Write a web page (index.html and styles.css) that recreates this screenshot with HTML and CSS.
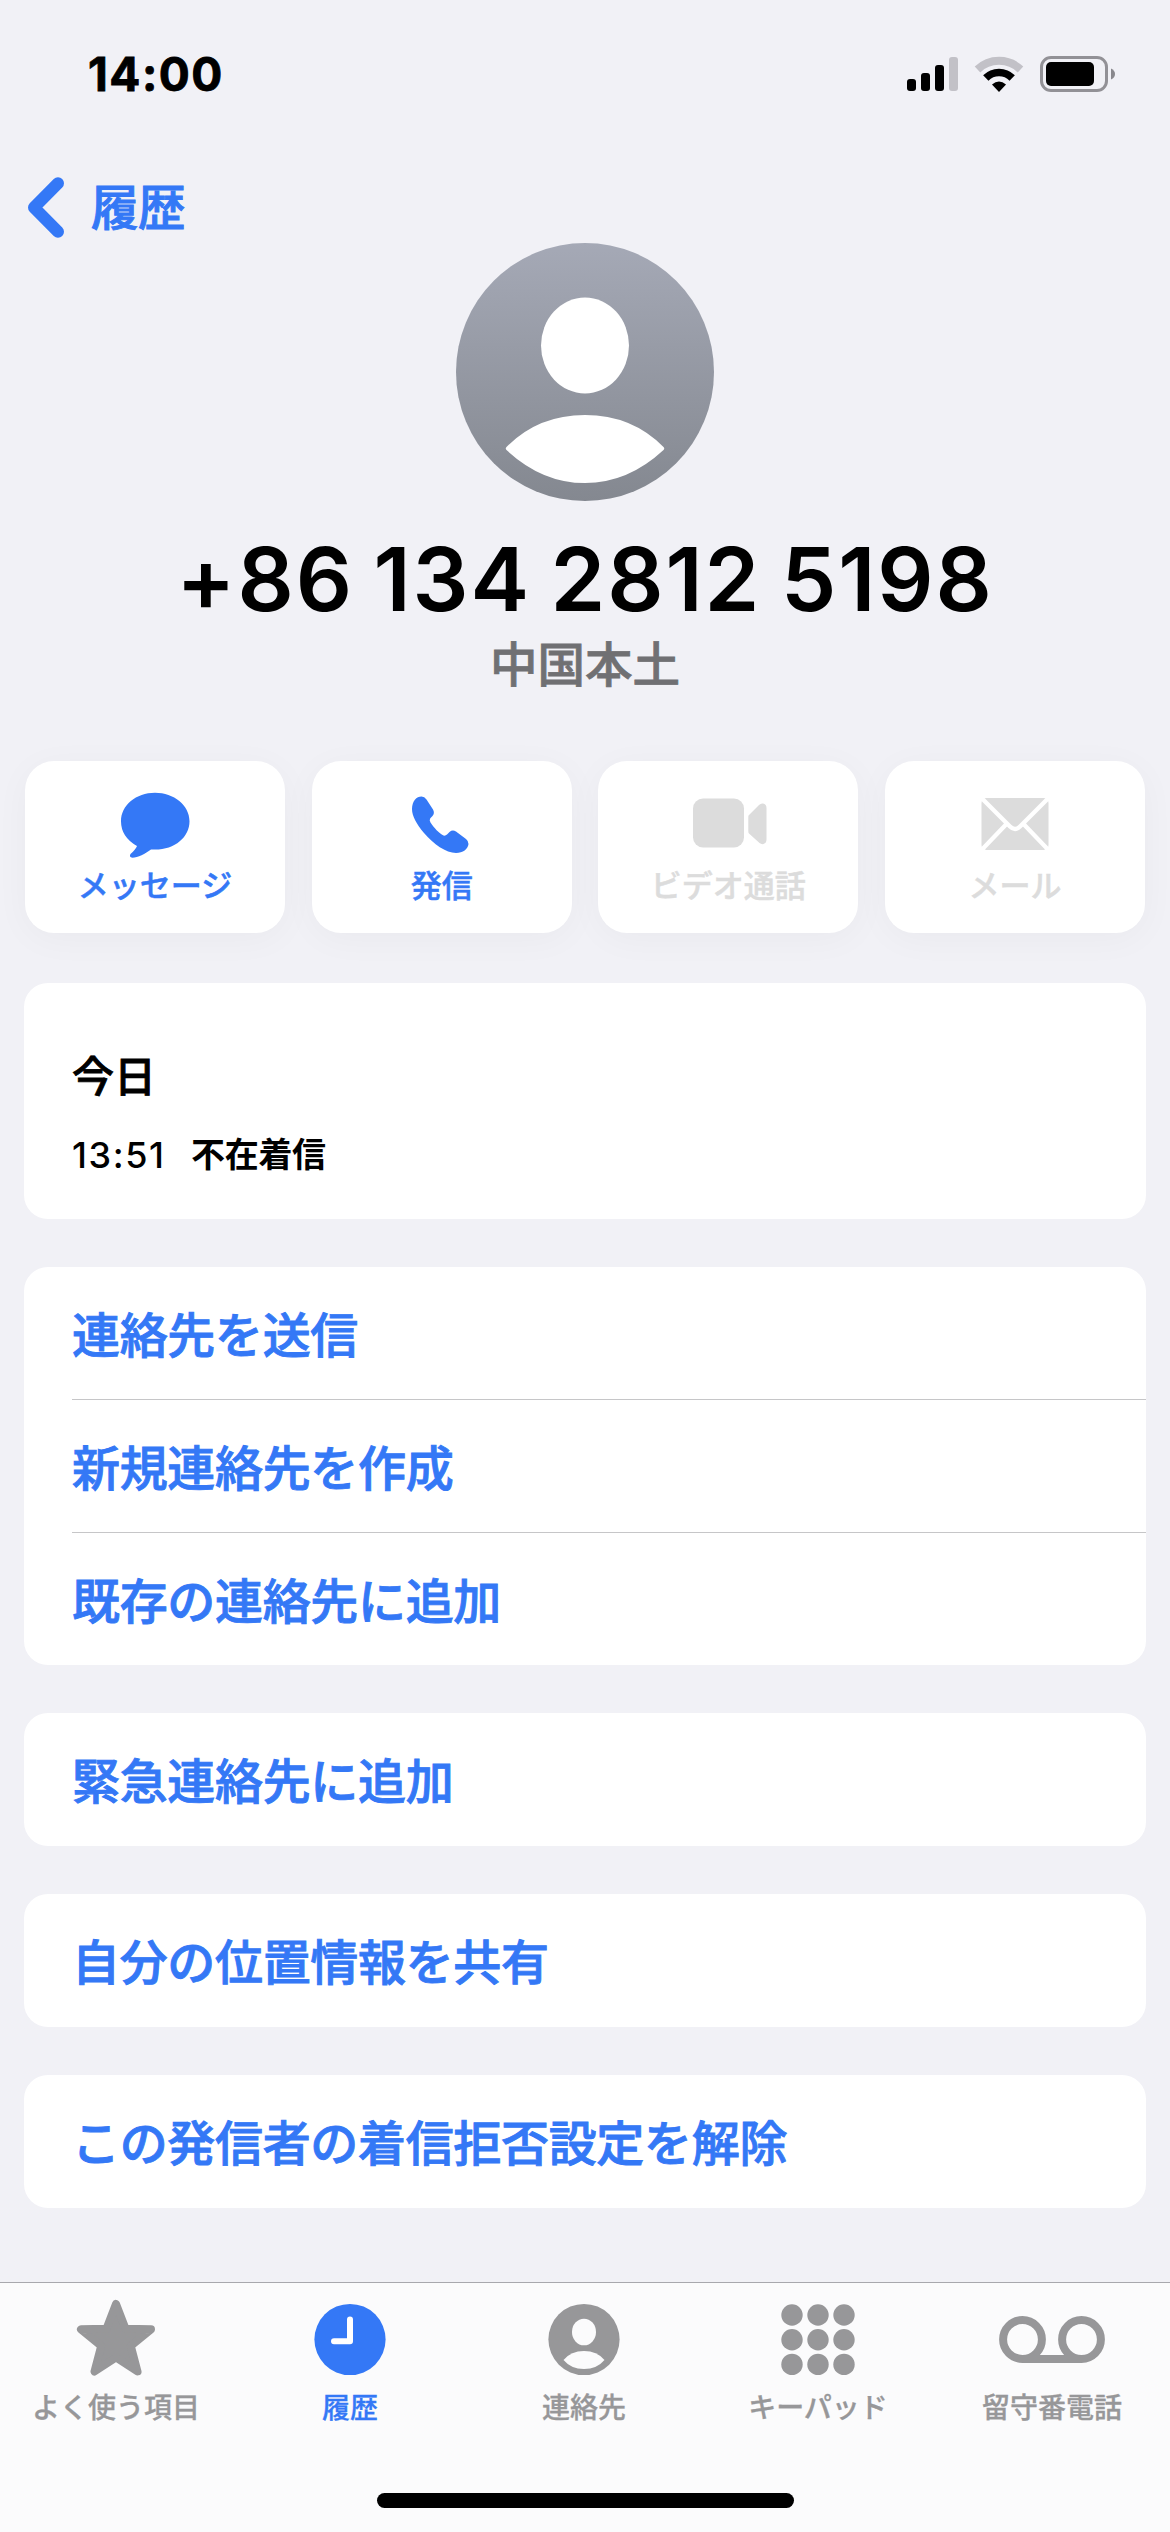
FILE: index.html
```html
<!DOCTYPE html>
<html lang="ja">
<head>
<meta charset="utf-8">
<title>履歴</title>
<link rel="stylesheet" href="styles.css">
</head>
<body>
<div class="screen">
  <header class="status">
    <span class="clock">14:00</span>
    <div class="status-icons">
      <svg width="51" height="36" viewBox="0 0 51 36"><rect x="0" y="23" width="9" height="12" rx="3"/><rect x="14" y="17" width="9" height="18" rx="3"/><rect x="28" y="9" width="9" height="26" rx="3"/><rect x="42" y="1" width="9" height="34" rx="3" fill="#c2c1c7"/></svg>
      <svg width="50" height="37" viewBox="0 0 50 37"><path d="M3.500 13.500A31 31 0 0 1 46.500 13.500" fill="none" stroke="#c2c1c7" stroke-width="8"/><path d="M11.800 22A18.500 18.500 0 0 1 38.200 22" fill="none" stroke="#000" stroke-width="7.500"/><path d="M18 28.500q7-6 14 0L25 36z"/></svg>
      <svg width="76" height="36" viewBox="0 0 76 36"><rect x="1.500" y="1.500" width="65" height="33" rx="9.500" fill="none" stroke="#929196" stroke-width="3"/><rect x="6" y="6" width="48" height="24" rx="5"/><path d="M71 12.500q4 2 4 5.500t-4 5.500z" fill="#89888d"/></svg>
    </div>
  </header>

  <nav class="nav">
    <svg width="36" height="61" viewBox="0 0 36 61"><path d="M30 6.200 6 30.500 30 54.800" fill="none" stroke="#3478f6" stroke-width="12" stroke-linecap="round" stroke-linejoin="round"/></svg>
    <span>履歴</span>
  </nav>

  <section class="profile">
    <svg class="avatar" width="258" height="258" viewBox="0 0 258 258">
      <defs><linearGradient id="av" x1="0" y1="0" x2="0" y2="1"><stop offset="0" stop-color="#a5a9b6"/><stop offset="1" stop-color="#848890"/></linearGradient></defs>
      <circle cx="129" cy="129" r="129" fill="url(#av)"/>
      <ellipse cx="129" cy="102.500" rx="44" ry="48" fill="#fff"/>
      <path d="M50.500 204Q82 172 129 172T207.500 204Q209 205.500 207.500 207Q172 240 129 240T50.500 207Q49 205.500 50.500 204z" fill="#fff"/>
    </svg>
    <h1 class="number">+86 134 2812 5198</h1>
    <p class="region">中国本土</p>
  </section>

  <section class="actions">
    <div class="action">
      <svg width="70" height="68" viewBox="0 0 70 68"><path d="M35 2C54 2 69.500 16 69.500 33.500S55 65 35 65H31C25 70 17 74.500 11.500 74Q9 73 10.500 70C14 66.500 16.500 63 17 61Q1 51 1 33.500C1 16 16 2 35 2z" transform="scale(1 .9)"/></svg>
      <span>メッセージ</span>
    </div>
    <div class="action">
      <svg class="phone" width="58" height="68" viewBox="0 0 58 68"><path d="M1 18C1 10 5.500 5.500 10.500 5.500Q13.500 5.500 15.500 8.500L22 18.500Q24 22 21.500 25L19.300 27.300Q18 29 19.500 31.500C23 37 28 42 32.500 44.500Q34.500 45 36 43.500L38.500 41Q41.500 38.500 45 40.500L55 48Q57.500 50 57.500 53C57 58 52 62 45 62C35 62 22.500 53 13 42C5.500 33 1 25 1 18z"/></svg>
      <span>発信</span>
    </div>
    <div class="action off">
      <svg class="video" width="75" height="68" viewBox="0 0 75 68"><rect x="0" y="7.500" width="51" height="49" rx="10"/><path d="M55.500 24.500 66 14Q68 12 70 12.500Q73.500 13 73.500 17V48.500Q73.500 52 70.500 53Q68.500 53.500 66.500 52L56 42.500Q55.300 42 55.300 40V27Q55.300 25.300 55.500 24.500z"/></svg>
      <span>ビデオ通話</span>
    </div>
    <div class="action off">
      <svg width="68" height="68" viewBox="0 0 68 68"><rect x=".5" y="7" width="67" height="52" rx="5"/><path d="M1 7.500 29 35.500Q34 40.500 39 35.500L67 7.500M25 33.500 1 58.500M43 33.500 67 58.500" fill="none" stroke="#fff" stroke-width="4.300"/></svg>
      <span>メール</span>
    </div>
  </section>

  <section class="card calls">
    <h2>今日</h2>
    <p><span class="time">13:51</span><b>不在着信</b></p>
  </section>

  <ul class="card list">
    <li>連絡先を送信</li>
    <li>新規連絡先を作成</li>
    <li>既存の連絡先に追加</li>
  </ul>
  <div class="card row">緊急連絡先に追加</div>
  <div class="card row">自分の位置情報を共有</div>
  <div class="card row">この発信者の着信拒否設定を解除</div>

  <footer class="tabs">
    <div class="tab">
      <svg width="80" height="80" viewBox="0 0 80 80"><path d="M40 8 49.500 32.700 75 33.300 54.800 50 61.500 75.500 40 61.500 18.500 75.500 25.200 50 5 33.300 30.500 32.700z" stroke="#979799" stroke-width="8" stroke-linejoin="round"/></svg>
      <span>よく使う項目</span>
    </div>
    <div class="tab on">
      <svg width="72" height="80" viewBox="0 0 72 80"><circle cx="36" cy="43.500" r="35.600"/><path d="M36 23.500V45.300H20" fill="none" stroke="#fff" stroke-width="6" stroke-linecap="round" stroke-linejoin="round"/></svg>
      <span>履歴</span>
    </div>
    <div class="tab">
      <svg width="72" height="80" viewBox="0 0 72 80"><circle cx="36" cy="43.500" r="35.600"/><ellipse cx="36" cy="36" rx="12" ry="13.300" fill="#fbfbfc"/><path d="M15.500 64Q23 55 36 55T56.500 64Q49 73 36 73T15.500 64z" fill="#fbfbfc"/></svg>
      <span>連絡先</span>
    </div>
    <div class="tab">
      <svg width="74" height="80" viewBox="0 0 74 80"><g><circle cx="11" cy="19" r="10.700"/><circle cx="37" cy="19" r="10.700"/><circle cx="63" cy="19" r="10.700"/><circle cx="11" cy="43.700" r="10.700"/><circle cx="37" cy="43.700" r="10.700"/><circle cx="63" cy="43.700" r="10.700"/><circle cx="11" cy="68.400" r="10.700"/><circle cx="37" cy="68.400" r="10.700"/><circle cx="63" cy="68.400" r="10.700"/></g></svg>
      <span>キーパッド</span>
    </div>
    <div class="tab">
      <svg width="106" height="80" viewBox="0 0 106 80"><g fill="none" stroke="#979799" stroke-width="8"><circle cx="23.500" cy="43.500" r="19.400"/><circle cx="82.500" cy="43.500" r="19.400"/><path d="M23.500 63H82.500"/></g></svg>
      <span>留守番電話</span>
    </div>
    <div class="home"></div>
  </footer>
</div>
</body>
</html>
```
FILE: styles.css
```css
* { box-sizing: border-box; margin: 0; padding: 0; }
body {
  width: 1170px;
  height: 2532px;
  background: #f1f1f6;
  color: #000;
  font-family: Inter, "Noto Sans CJK JP", sans-serif;
}
svg { display: block; flex: none; }
.screen { display: flex; flex-direction: column; height: 2532px; overflow: hidden; }

.status { display: flex; justify-content: space-between; height: 150px; padding: 0 54px 0 88px; }
.clock { margin-top: 44px; font-size: 46px; line-height: 60px; font-weight: 700; letter-spacing: 1.5px; -webkit-text-stroke: .8px; }
.status-icons { display: flex; gap: 16px; padding-top: 56px; }

.nav { display: flex; align-items: center; gap: 27px; height: 93px; padding: 22px 28px 0; color: #3478f6; font-size: 47.500px; font-weight: 500; letter-spacing: -0.500px; -webkit-text-stroke: 1px; }
.nav span { padding-top: 1px; line-height: 60px; }

.profile { display: flex; flex-direction: column; align-items: center; height: 518px; }
.number { margin-top: 24px; font-size: 88px; line-height: 108px; font-weight: 600; white-space: nowrap; letter-spacing: 1.9px; word-spacing: -4.500px; }
.region { margin-top: 2px; color: #707073; font-size: 47.500px; line-height: 60px; font-weight: 500; -webkit-text-stroke: .8px; }

.actions { display: grid; grid-template-columns: repeat(4, 260px); justify-content: space-between; height: 222px; padding: 0 25px; }
.action {
  display: flex; flex-direction: column; align-items: center;
  height: 172px; padding-top: 30px; border-radius: 29px;
  background: #fff; box-shadow: 0 6px 36px rgba(0, 0, 0, .035);
  color: #3478f6; fill: #3478f6; font-size: 31px; line-height: 40px; font-weight: 500;
  -webkit-text-stroke: .5px;
}
.action span { margin-top: 7px; }
.action.off { color: #dcdcdc; fill: #dcdcdc; }
.phone { margin-right: 3px; }
.video { margin-left: 5px; }

.card { flex: none; margin: 0 24px 48px; border-radius: 24px; background: #fff; }
.calls { height: 236px; padding: 67px 48px 0; }
.calls h2 { font-size: 42px; line-height: 54px; font-weight: 500; -webkit-text-stroke: .8px; }
.calls p { display: flex; margin-top: 28px; font-size: 34px; line-height: 46px; }
.calls b { letter-spacing: -.3px; }
.time { width: 119px; font-size: 36px; font-weight: 500; letter-spacing: 1.6px; }

.list, .row { color: #3478f6; font-size: 48px; font-weight: 500; letter-spacing: -.33px; -webkit-text-stroke: .9px; }
.list { height: 398px; padding-left: 48px; list-style: none; }
.list li { height: 132px; line-height: 137px; }
.list li + li { height: 133px; border-top: 1px solid #c6c6c8; }
.row { height: 133px; padding-left: 48px; line-height: 138px; }

.tabs {
  position: relative;
  flex: none; display: grid; grid-template-columns: repeat(5, 1fr);
  height: 250px; margin-top: auto; border-top: 1px solid #a8a8ad; background: #fbfbfc;
}
.tab { display: flex; flex-direction: column; align-items: center; padding: 13px 2px 0 0; color: #979799; fill: #979799; font-size: 28px; line-height: 40px; font-weight: 500; }
.tab span { margin-top: 12px; -webkit-text-stroke: .3px; }
.tab.on { color: #3478f6; fill: #3478f6; }
.home { position: absolute; left: 377px; top: 210px; width: 417px; height: 15px; border-radius: 8px; background: #000; }
```
